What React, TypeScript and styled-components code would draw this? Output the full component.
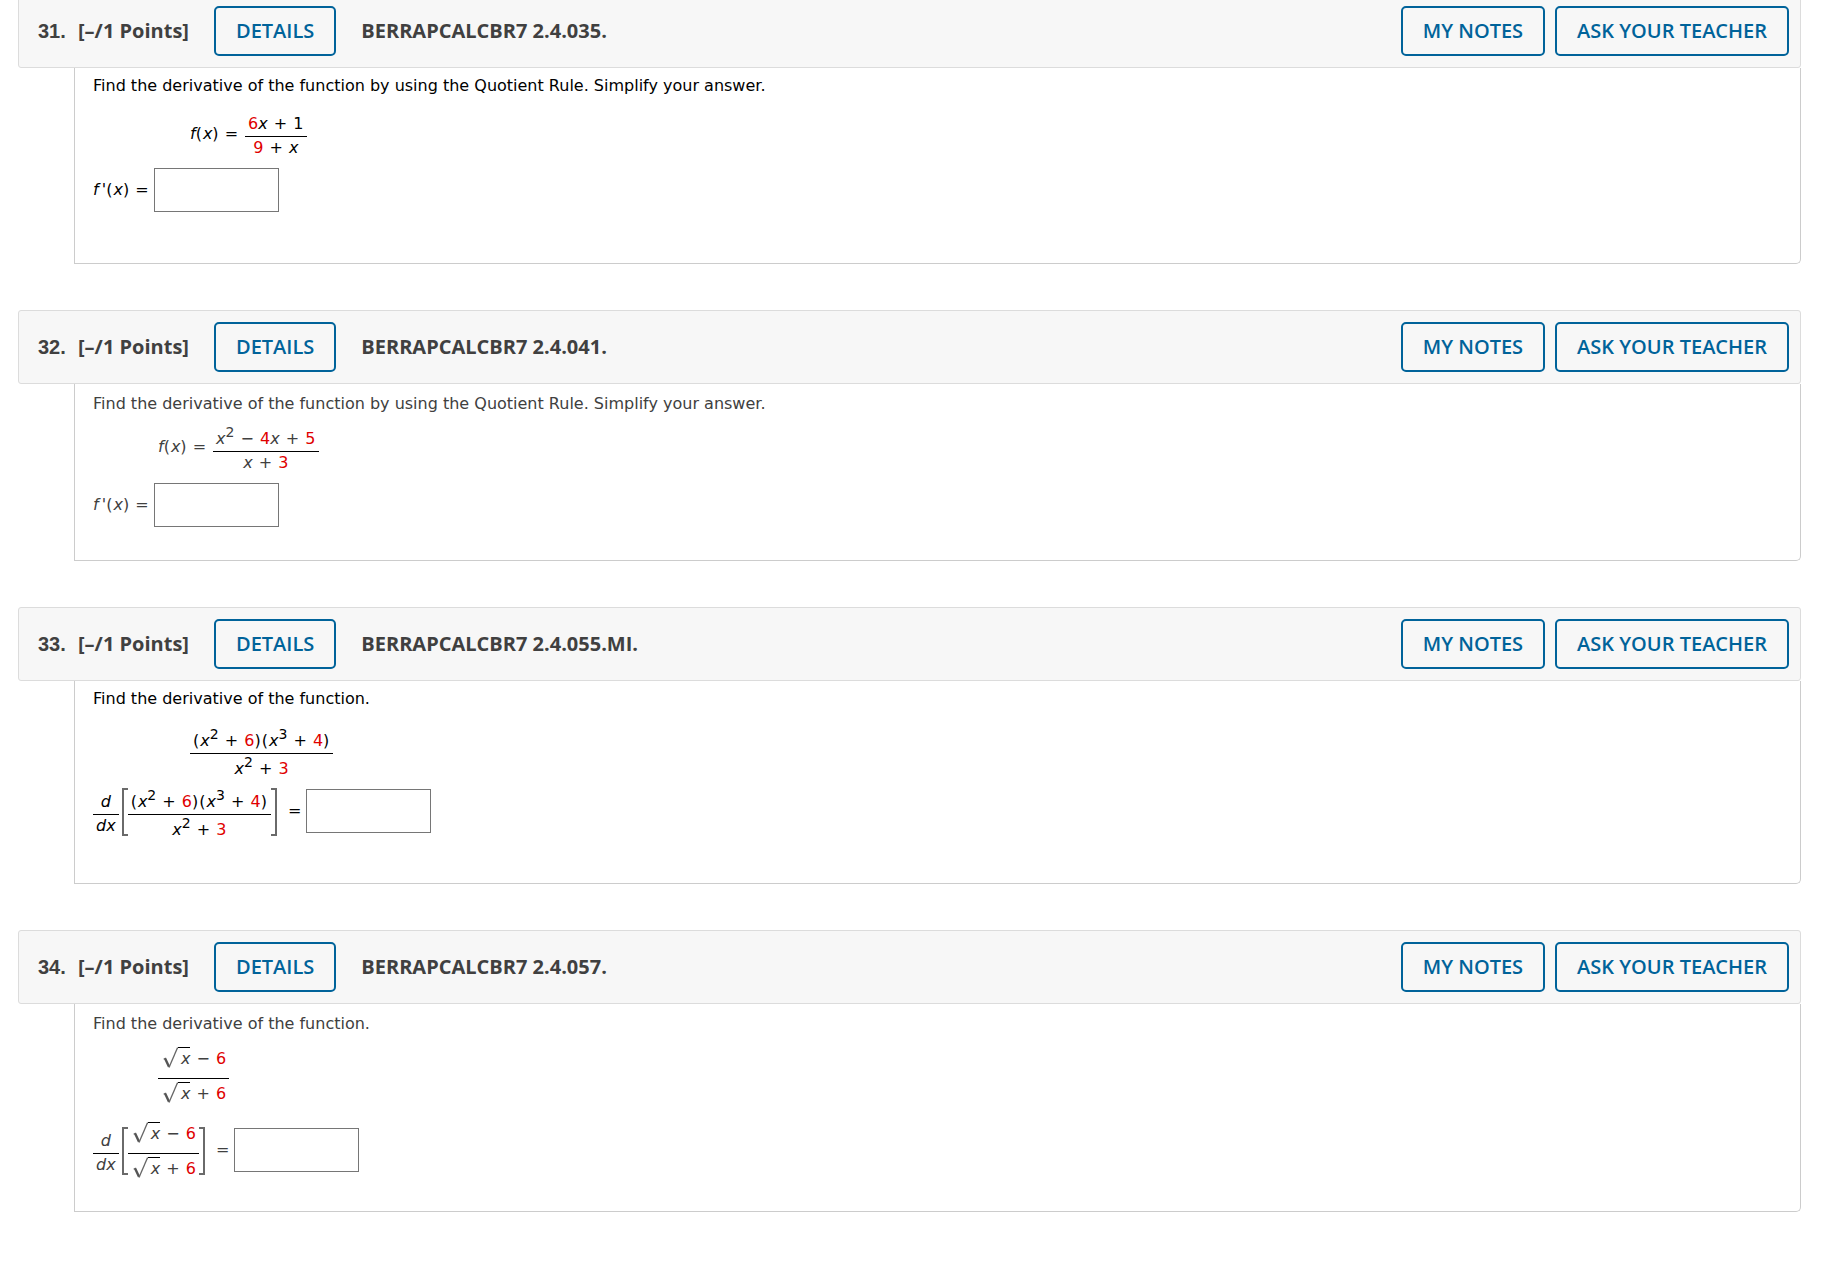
import React from "react";
import styled, { createGlobalStyle } from "styled-components";

const GlobalStyle = createGlobalStyle`
  *, *::before, *::after { box-sizing: border-box; }
  body {
    margin: 0;
    background: #fff;
    color: #404040;
    font-family: "Open Sans", "Noto Sans", sans-serif;
  }
`;

const Page = styled.main`
  display: flex;
  flex-direction: column;
  gap: 46px;
  margin: -6px 20px 48px 18px;
`;

const Header = styled.header`
  display: flex;
  align-items: center;
  padding: 11px 11px 11px 19px;
  background: #f7f7f7;
  border: 1px solid #dcdcdc;
  border-radius: 3px;
`;

const Heading = styled.h2`
  display: flex;
  align-items: center;
  margin: 0;
  font-size: 20px;
  line-height: 24px;
  font-weight: 700;
`;

const Number = styled.span`
  width: 40px;
  font-family: "Liberation Sans", Arial, sans-serif;
`;

const Points = styled.span`
  width: 136px;
`;

const Code = styled.span`
  margin-left: 25px;
`;

const Actions = styled.div`
  display: flex;
  gap: 10px;
  margin-left: auto;
`;

const Button = styled.button`
  height: 50px;
  padding: 0 20px;
  background: transparent;
  border: 2px solid #00639a;
  border-radius: 5px;
  color: #00639a;
  font: 600 20px/24px "Open Sans", "Noto Sans", sans-serif;
  white-space: nowrap;
  cursor: pointer;
`;

const Panel = styled.div<{ $spaced: boolean }>`
  margin-left: 56px;
  padding: ${(p) => (p.$spaced ? "6px 18px 42px" : "8px 18px 24px")};
  border: 1px solid #ccc;
  border-top: 0;
  border-radius: 0 0 5px 0;
  color: ${(p) => (p.$spaced ? "#000" : "#404040")};
  font-family: "DejaVu Sans", Verdana, sans-serif;
  font-size: 16px;
  line-height: 22px;
`;

const Prompt = styled.p`
  margin: 0;
  line-height: 24px;
`;

const Expression = styled.div<{ $spaced: boolean }>`
  display: flex;
  align-items: center;
  margin-top: ${(p) => (p.$spaced ? 15 : 8)}px;
  padding-left: ${(p) => (p.$spaced ? 97 : 65)}px;
  white-space: nowrap;
`;

const Name = styled.span`
  padding: 0 7px 4px 0;
`;

const AnswerRow = styled.div<{ $tall?: boolean }>`
  display: flex;
  align-items: center;
  padding: ${(p) => (p.$tall ? "0" : "9px 0")};
  white-space: nowrap;
`;

const AnswerLabel = styled.label`
  display: flex;
  align-items: center;
  margin-right: 5px;
`;

const Answer = styled.input`
  width: 125px;
  height: 44px;
  padding: 0 8px;
  border: 1px solid #767676;
  border-radius: 0;
  background: #fff;
  font: 16px/22px "DejaVu Sans", Verdana, sans-serif;
`;

const Operand = styled.span`
  display: flex;
  align-items: center;
  padding-top: 7px;
`;

const Equals = styled.span`
  margin-left: 11px;
`;

const FractionBox = styled.span`
  display: inline-flex;
  flex-direction: column;
  text-align: center;
`;

const Numerator = styled.span`
  padding: 0 3px 1px;
  border-bottom: 1px solid #000;
`;

const Denominator = styled.span`
  padding: 0 3px;
`;

const Bracket = styled.span<{ $side: "left" | "right" }>`
  width: 6px;
  height: 48px;
  margin-bottom: 4px;
  margin-left: ${(p) => (p.$side === "left" ? 3 : 0)}px;
  border: 2px solid #6a6a6a;
  border-${(p) => (p.$side === "left" ? "right" : "left")}: 0;
`;

const Red = styled.span`
  color: #e00000;
`;

const Op = styled.span`
  margin: 0 1px;
`;

const Paren = styled.span`
  margin-right: 1px;
`;

const Sup = styled.sup`
  font-size: 14px;
  line-height: 16px;
  vertical-align: 7px;
`;

const RootBox = styled.span`
  display: inline-flex;
  align-items: flex-start;
  margin: 3px 0 9px 2px;
`;

const Radicand = styled.span`
  align-self: baseline;
  height: 21px;
  padding-left: 3px;
  border-top: 1px solid #000;
  line-height: 22px;
`;

function Root({ children }: { children: React.ReactNode }) {
  return (
    <RootBox>
      <svg width="15" height="21" viewBox="0 0 15 21" fill="none" aria-hidden="true">
        <path d="M0.6 12.2 2.8 11" stroke="#888" strokeWidth="1.2" />
        <path d="M2 11.2 6 19.8" stroke="#555" strokeWidth="2.4" />
        <path d="M6 20.6 14.6 0.5" stroke="#666" strokeWidth="1.3" />
      </svg>
      <Radicand>{children}</Radicand>
    </RootBox>
  );
}

function Fraction({ top, bottom }: { top: React.ReactNode; bottom: React.ReactNode }) {
  return (
    <FractionBox>
      <Numerator>{top}</Numerator>
      <Denominator>{bottom}</Denominator>
    </FractionBox>
  );
}

const X = () => <i>x</i>;
const Plus = () => <> <Op>+</Op> </>;
const Minus = () => <> <Op>−</Op> </>;

function Group({ children }: { children: React.ReactNode }) {
  return (
    <>
      <Paren>(</Paren>
      {children}
      <Paren>)</Paren>
    </>
  );
}

function DerivativeOf({ children }: { children: React.ReactNode }) {
  return (
    <>
      <Operand>
        <Fraction top={<i>d</i>} bottom={<i>dx</i>} />
        <Bracket $side="left" />
        {children}
        <Bracket $side="right" />
      </Operand>
      <Equals>=</Equals>
    </>
  );
}

const functionName = (
  <Name>
    <i>f</i><Group><X /></Group> =
  </Name>
);

const derivativeName = (
  <span>
    <i>f&thinsp;'</i><Group><X /></Group> =
  </span>
);

const productQuotient = (
  <Fraction
    top={
      <>
        <Group><X /><Sup>2</Sup><Plus /><Red>6</Red></Group>
        <Group><X /><Sup>3</Sup><Plus /><Red>4</Red></Group>
      </>
    }
    bottom={<><X /><Sup>2</Sup><Plus /><Red>3</Red></>}
  />
);

const rootQuotient = (
  <Fraction
    top={<><Root><X /></Root><Minus /><Red>6</Red></>}
    bottom={<><Root><X /></Root><Plus /><Red>6</Red></>}
  />
);

interface Question {
  number: number;
  code: string;
  prompt: string;
  spaced: boolean;
  tall?: boolean;
  expression: React.ReactNode;
  answerLabel: React.ReactNode;
}

const questions: Question[] = [
  {
    number: 31,
    code: "BERRAPCALCBR7 2.4.035.",
    prompt: "Find the derivative of the function by using the Quotient Rule. Simplify your answer.",
    spaced: true,
    expression: (
      <>
        {functionName}
        <Fraction
          top={<><Red>6</Red><X /><Plus />1</>}
          bottom={<><Red>9</Red><Plus /><X /></>}
        />
      </>
    ),
    answerLabel: derivativeName,
  },
  {
    number: 32,
    code: "BERRAPCALCBR7 2.4.041.",
    prompt: "Find the derivative of the function by using the Quotient Rule. Simplify your answer.",
    spaced: false,
    expression: (
      <>
        {functionName}
        <Fraction
          top={<><X /><Sup>2</Sup><Minus /><Red>4</Red><X /><Plus /><Red>5</Red></>}
          bottom={<><X /><Plus /><Red>3</Red></>}
        />
      </>
    ),
    answerLabel: derivativeName,
  },
  {
    number: 33,
    code: "BERRAPCALCBR7 2.4.055.MI.",
    prompt: "Find the derivative of the function.",
    spaced: true,
    tall: true,
    expression: productQuotient,
    answerLabel: <DerivativeOf>{productQuotient}</DerivativeOf>,
  },
  {
    number: 34,
    code: "BERRAPCALCBR7 2.4.057.",
    prompt: "Find the derivative of the function.",
    spaced: false,
    tall: true,
    expression: rootQuotient,
    answerLabel: <DerivativeOf>{rootQuotient}</DerivativeOf>,
  },
];

export default function App() {
  return (
    <>
      <GlobalStyle />
      <Page>
        {questions.map((q) => (
          <section key={q.number}>
            <Header>
              <Heading>
                <Number>{q.number}.</Number>
                <Points>[–/1 Points]</Points>
              </Heading>
              <Button type="button">DETAILS</Button>
              <Heading as="div">
                <Code>{q.code}</Code>
              </Heading>
              <Actions>
                <Button type="button">MY NOTES</Button>
                <Button type="button">ASK YOUR TEACHER</Button>
              </Actions>
            </Header>
            <Panel $spaced={q.spaced}>
              <Prompt>{q.prompt}</Prompt>
              <Expression $spaced={q.spaced}>{q.expression}</Expression>
              <AnswerRow $tall={q.tall}>
                <AnswerLabel htmlFor={`answer-${q.number}`}>{q.answerLabel}</AnswerLabel>
                <Answer id={`answer-${q.number}`} type="text" />
              </AnswerRow>
            </Panel>
          </section>
        ))}
      </Page>
    </>
  );
}
